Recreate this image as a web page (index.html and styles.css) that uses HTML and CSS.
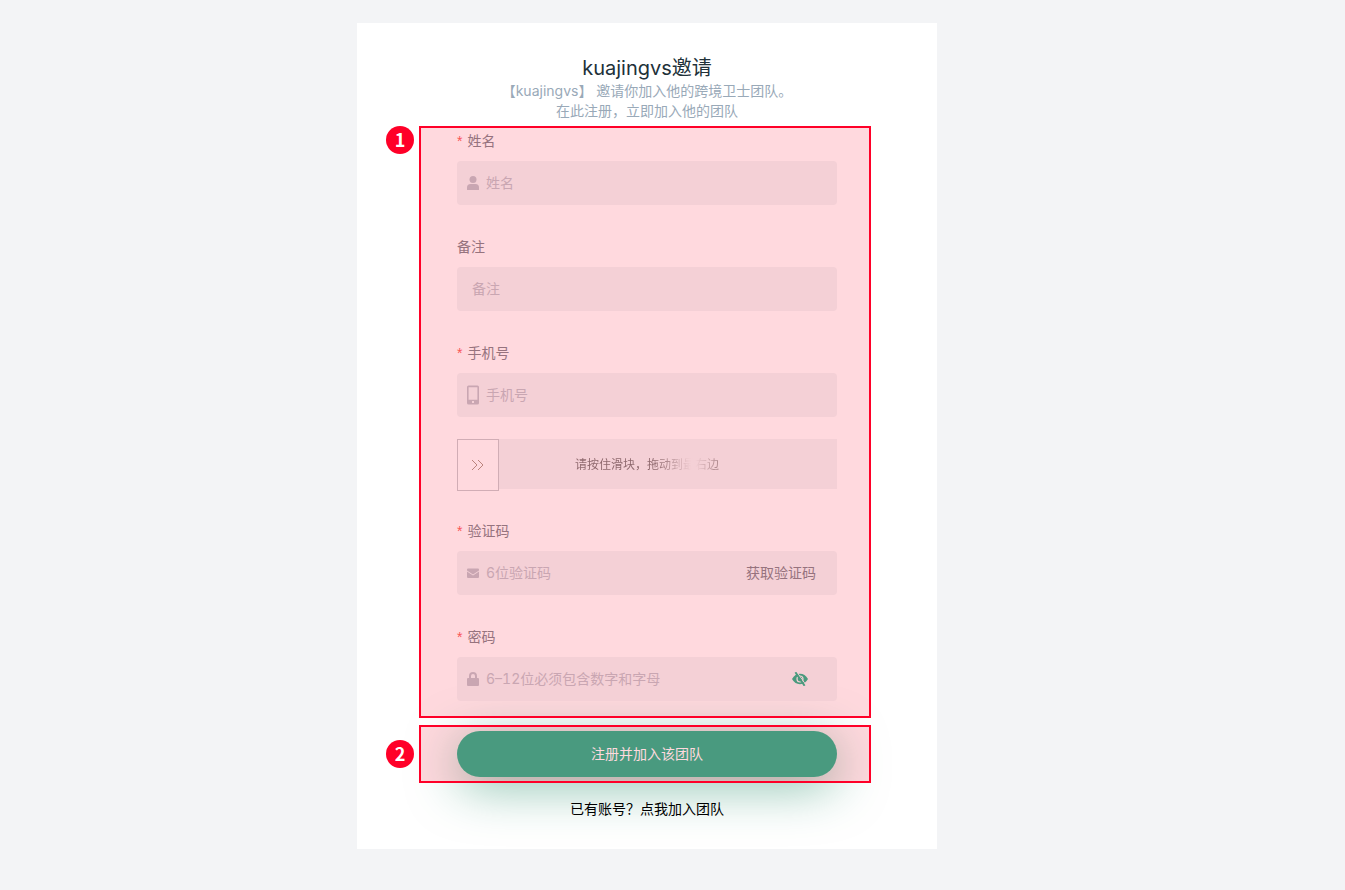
FILE: index.html
```html
<!DOCTYPE html>
<html lang="zh-CN">
<head>
<meta charset="utf-8">
<title>kuajingvs邀请</title>
<link rel="stylesheet" href="styles.css">
</head>
<body>
<main class="card">
  <header class="intro">
    <h1 class="title">kuajingvs邀请</h1>
    <p class="lead">【kuajingvs】 邀请你加入他的跨境卫士团队。</p>
    <p class="lead">在此注册，立即加入他的团队</p>
  </header>
  <form>
    <section class="step">
      <div class="field">
        <label class="label required" for="name">姓名</label>
        <div class="control">
          <svg class="icon" viewBox="0 0 14 14" aria-hidden="true"><circle cx="7" cy="3.5" r="3.5"/><path d="M1 13.4V11.6Q1 8 4.5 8H9.5Q13 8 13 11.6V13.4Q13 14 12.4 14H1.6Q1 14 1 13.4Z"/></svg>
          <input class="input" id="name" type="text" placeholder="姓名">
        </div>
      </div>
      <div class="field">
        <label class="label" for="remark">备注</label>
        <div class="control plain">
          <input class="input" id="remark" type="text" placeholder="备注">
        </div>
      </div>
      <div class="field">
        <label class="label required" for="phone">手机号</label>
        <div class="control">
          <svg class="icon tall" viewBox="0 0 14 20" aria-hidden="true"><path fill-rule="evenodd" d="M2.5 .5H11.5Q13 .5 13 2V18Q13 19.5 11.5 19.5H2.5Q1 19.5 1 18V2Q1 .5 2.5 .5ZM2.6 2.3V14.8H11.4V2.3ZM6 16V18H8V16Z"/></svg>
          <input class="input" id="phone" type="tel" placeholder="手机号">
        </div>
      </div>
      <div class="slider">
        <button class="handle" type="button" aria-label="滑块">
          <svg class="arrows" viewBox="0 0 14 12" aria-hidden="true"><path d="M1 1L6 6L1 11M7 1L12 6L7 11"/></svg>
        </button>
        <span class="hint">请按住滑块，拖动到最右边</span>
      </div>
      <div class="field">
        <label class="label required" for="code">验证码</label>
        <div class="control">
          <svg class="icon" viewBox="0 0 14 14" aria-hidden="true"><path d="M2 2.5H12Q13 2.5 13 3.5V4.4L7 8.4L1 4.4V3.5Q1 2.5 2 2.5ZM1 5.5L7 9.5L13 5.5V11Q13 12 12 12H2Q1 12 1 11Z"/></svg>
          <input class="input" id="code" type="text" placeholder="6位验证码">
          <button class="send" type="button">获取验证码</button>
        </div>
      </div>
      <div class="field">
        <label class="label required" for="password">密码</label>
        <div class="control">
          <svg class="icon" viewBox="0 0 14 14" aria-hidden="true"><path fill-rule="evenodd" d="M3 6V4A4 4 0 0 1 11 4V6H12Q13 6 13 7V13Q13 14 12 14H2Q1 14 1 13V7Q1 6 2 6ZM5 6H9V4A2 2 0 0 0 5 4Z"/></svg>
          <input class="input" id="password" type="password" placeholder="6–12位必须包含数字和字母">
          <button class="reveal" type="button" aria-label="显示密码">
            <svg class="eye" viewBox="0 0 16 14" aria-hidden="true"><path fill-rule="evenodd" d="M0 7Q3 1.8 8 1.8T16 7Q13 12.2 8 12.2T0 7ZM8 3.4A3.6 3.6 0 1 0 8 10.6A3.6 3.6 0 1 0 8 3.4Z"/><circle cx="8" cy="7" r="2.4"/><path class="gap" d="M4.8 0L14 13"/><path class="slash" d="M3.4 .3L12.6 13.7"/></svg>
          </button>
        </div>
      </div>
      <div class="mark"></div>
      <span class="badge">1</span>
    </section>
    <section class="step submit-step">
      <button class="submit" type="submit">注册并加入该团队</button>
      <div class="mark"></div>
      <span class="badge">2</span>
    </section>
  </form>
  <a class="login" href="#">已有账号？点我加入团队</a>
</main>
</body>
</html>
```
FILE: styles.css
```css
* { box-sizing: border-box; }
body {
  margin: 0;
  min-height: 100vh;
  padding: 23px 51px 41px 0;
  background: #f3f4f6;
  font: 14px/20px Inter, "Noto Sans CJK SC", sans-serif;
  color: #84888f;
}
button, input { font: inherit; color: inherit; border: 0; background: none; padding: 0; }
button { cursor: pointer; }
.card {
  display: flex;
  flex-direction: column;
  max-width: 580px;
  margin: 0 auto;
  padding: 32px 100px 30px;
  background: #fff;
}
.intro { text-align: center; white-space: nowrap; }
.title { margin: 0; font-size: 20px; line-height: 26px; font-weight: 400; color: #213139; }
.lead { margin: 0; color: #99a9b8; }
.step { position: relative; z-index: 1; display: flex; flex-direction: column; gap: 22px; }
.submit-step { z-index: 0; margin-top: 30px; }
.label { display: block; line-height: 40px; }
.required::before { content: "*"; margin-right: 5px; font-family: "Liberation Sans", sans-serif; color: #f8665f; }
.control {
  display: flex;
  align-items: center;
  gap: 6px;
  height: 44px;
  padding: 0 21px 0 9px;
  border-radius: 4px;
  background: #f3f5f6;
}
.plain { padding-left: 15px; }
.input { flex: 1; min-width: 0; height: 42px; padding-bottom: 2px; outline: 0; font-variant-numeric: tabular-nums; }
.input::placeholder { color: #c0c4cc; opacity: 1; }
.icon { flex: none; width: 14px; height: 14px; fill: #c0c4cc; }
.tall { height: 20px; }
.slider {
  display: flex;
  align-items: flex-start;
  height: 50px;
  background: #f3f5f6;
}
.handle {
  display: grid;
  place-items: center;
  flex: none;
  width: 42px;
  height: 52px;
  border: 1px solid #c9cccf;
  background: #fff;
}
.arrows { width: 14px; height: 12px; fill: none; stroke: #b09a8c; stroke-width: 1; }
.hint {
  flex: 1;
  padding-right: 42px;
  font-size: 12px;
  line-height: 52px;
  text-align: center;
  color: transparent;
  background: linear-gradient(90deg, #777 0 46%, #f3f5f6 57% 58%, #999 65%);
  background-clip: text;
  -webkit-background-clip: text;
}
.reveal { display: grid; margin-right: 8px; }
.eye { width: 16px; height: 14px; fill: #2bb68f; }
.gap { stroke: #f3f5f6; stroke-width: 1; }
.slash { stroke: #2bb68f; stroke-width: 2; }
.submit {
  height: 46px;
  border-radius: 23px;
  background: #2ab690;
  color: #fff;
  box-shadow: 0 10px 50px rgba(23, 133, 96, .5);
}
.mark {
  position: absolute;
  inset: 5px -34px -17px -38px;
  border: 2px solid #ff0028;
  background: rgba(255, 0, 35, .15);
  background-clip: padding-box;
  pointer-events: none;
}
.submit-step .mark { inset: -6px -34px -6px -38px; }
.badge {
  position: absolute;
  top: 5px;
  left: -71px;
  width: 28px;
  height: 28px;
  border-radius: 50%;
  background: #ff0028;
  color: #fff;
  font: 700 18px/27px "Noto Sans CJK SC", sans-serif;
  text-align: center;
}
.submit-step .badge { top: 9px; }
.login {
  position: relative;
  align-self: center;
  margin-top: 22px;
  color: #000;
  text-decoration: none;
}
```
